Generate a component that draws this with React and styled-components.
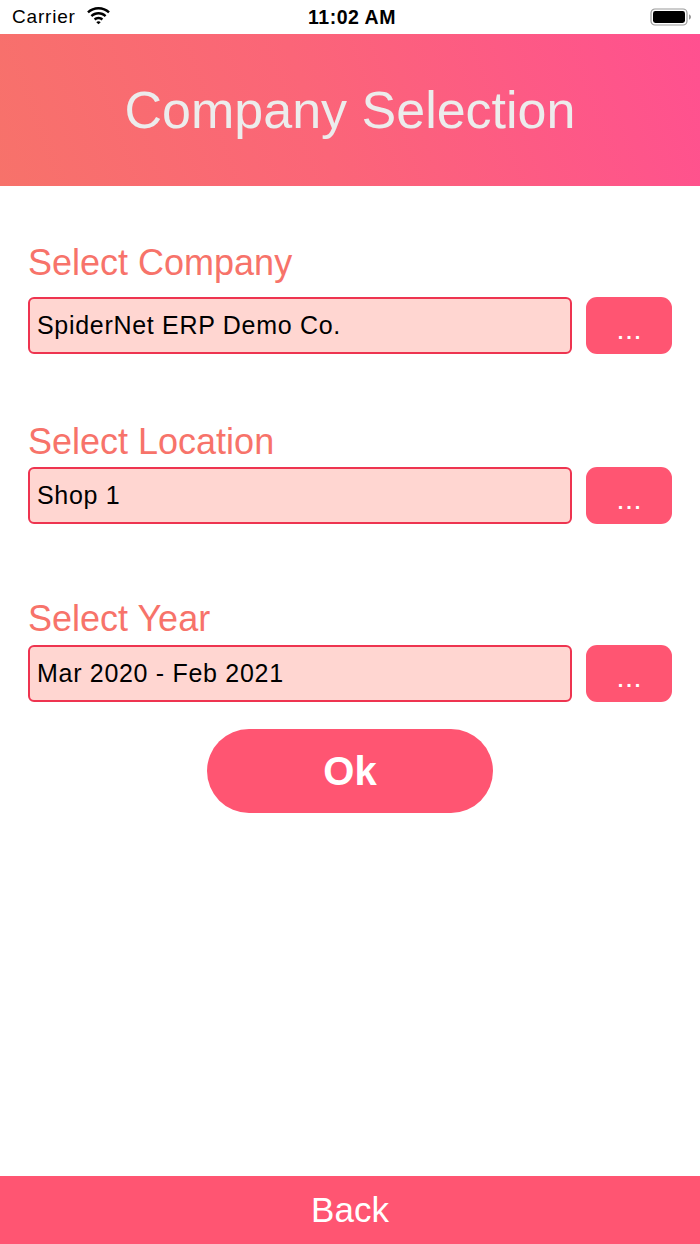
import React from 'react'
import styled, { createGlobalStyle } from 'styled-components'

const GlobalStyle = createGlobalStyle`
  html, body {
    margin: 0;
    padding: 0;
    background: #ffffff;
  }
  body {
    font-family: 'Liberation Sans', Arial, sans-serif;
  }
`

const fields = [
  { label: 'Select Company', value: 'SpiderNet ERP Demo Co.', top: 57, gap: 14 },
  { label: 'Select Location', value: 'Shop 1', top: 68, gap: 5 },
  { label: 'Select Year', value: 'Mar 2020 - Feb 2021', top: 75, gap: 6 }
]

export default () => (
  <>
    <GlobalStyle />
    <Screen>
      <StatusBar>
        <Carrier>
          Carrier
          <WifiIcon />
        </Carrier>
        <Clock>11:02 AM</Clock>
        <Battery>
          <BatteryIcon />
        </Battery>
      </StatusBar>
      <Header>
        <Title>Company Selection</Title>
      </Header>
      <Form>
        {fields.map(f => (
          <Section key={f.label} top={f.top}>
            <Label gap={f.gap}>{f.label}</Label>
            <Row>
              <Field>{f.value}</Field>
              <PickButton>...</PickButton>
            </Row>
          </Section>
        ))}
        <OkButton>Ok</OkButton>
      </Form>
      <BackBar>Back</BackBar>
    </Screen>
  </>
)

const WifiIcon = () => (
  <svg width='25' height='19' viewBox='0 0 24 18'>
    <path d='M12 3.2c3.6 0 6.9 1.4 9.3 3.7l1.6-1.7C20 2.5 16.2.9 12 .9S4 2.5 1.1 5.2l1.6 1.7C5.1 4.6 8.4 3.2 12 3.2z' fill='#000' />
    <path d='M12 8c2.3 0 4.4.9 6 2.4l1.6-1.7C17.6 6.8 14.9 5.7 12 5.7S6.4 6.8 4.4 8.7L6 10.4C7.6 8.9 9.7 8 12 8z' fill='#000' />
    <path d='M12 12.6c1.1 0 2.1.4 2.8 1.1l1.7-1.7c-1.2-1.1-2.8-1.8-4.5-1.8s-3.3.7-4.5 1.8l1.7 1.7c.7-.7 1.7-1.1 2.8-1.1z' fill='#000' />
    <path d='M12 17.5l2.1-2.1c-.5-.5-1.3-.8-2.1-.8s-1.6.3-2.1.8z' fill='#000' />
  </svg>
)

const BatteryIcon = () => (
  <svg width='42' height='18' viewBox='0 0 42 18'>
    <rect x='1' y='1' width='36' height='16' rx='4' fill='none' stroke='#9a9a9a' strokeWidth='1.2' />
    <rect x='3' y='3' width='32' height='12' rx='2.4' fill='#000' />
    <path d='M39 6.5c1.3.3 2 1.3 2 2.5s-.7 2.2-2 2.5z' fill='#9a9a9a' />
  </svg>
)

const Screen = styled.div`
  display: flex;
  flex-direction: column;
  min-height: 1244px;
`

const StatusBar = styled.div`
  height: 34px;
  display: grid;
  grid-template-columns: 1fr auto 1fr;
  align-items: center;
  padding: 0 8px 0 12px;
  color: #000;
`

const Carrier = styled.div`
  display: flex;
  align-items: center;
  gap: 10px;
  font-size: 19px;
  letter-spacing: 0.8px;
  svg {
    margin-top: -4px;
  }
`

const Clock = styled.div`
  font-size: 19.5px;
  font-weight: bold;
  letter-spacing: 0.5px;
`

const Battery = styled.div`
  justify-self: end;
  display: flex;
`

const Header = styled.header`
  height: 152px;
  display: flex;
  align-items: center;
  justify-content: center;
  background: linear-gradient(70deg, #f7726a 0%, #fb6578 45%, #ff5090 100%);
`

const Title = styled.h1`
  margin: 0;
  font-weight: normal;
  font-size: 52px;
  color: #ececec;
`

const Form = styled.main`
  display: flex;
  flex-direction: column;
  padding: 0 28px;
`

const Section = styled.section`
  margin-top: ${({ top }) => top}px;
`

const Label = styled.div`
  font-size: 36px;
  line-height: 40px;
  color: #f7736a;
  margin-bottom: ${({ gap }) => gap}px;
`

const Row = styled.div`
  display: flex;
  gap: 14px;
  height: 57px;
`

const Field = styled.div`
  flex: 1;
  display: flex;
  align-items: center;
  padding: 0 7px;
  background: #ffd6d1;
  border: 2px solid #ee3450;
  border-radius: 6px;
  font-size: 25px;
  letter-spacing: 0.7px;
  color: #000;
`

const PickButton = styled.button`
  width: 86px;
  border: none;
  border-radius: 11px;
  background: #ff5572;
  color: #fff;
  font-family: 'Liberation Sans', Arial, sans-serif;
  font-size: 20px;
  font-weight: bold;
  letter-spacing: 3px;
  padding: 14px 0 0 3px;
`

const OkButton = styled.button`
  align-self: center;
  margin-top: 27px;
  width: 286px;
  height: 84px;
  border: none;
  border-radius: 42px;
  background: #ff5572;
  color: #fff;
  font-family: 'Liberation Sans', Arial, sans-serif;
  font-size: 40px;
  font-weight: bold;
`

const BackBar = styled.footer`
  margin-top: auto;
  height: 68px;
  display: flex;
  align-items: center;
  justify-content: center;
  background: #ff5572;
  color: #fff;
  font-size: 35px;
`
